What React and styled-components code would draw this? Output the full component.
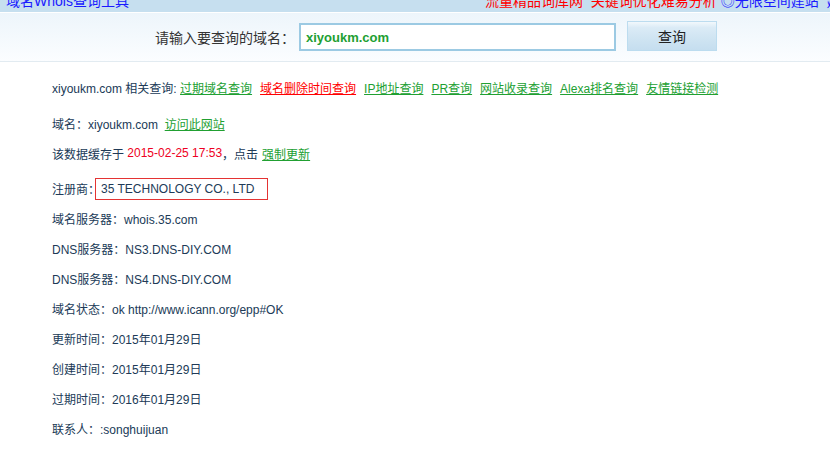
import React from "react";
import styled, { createGlobalStyle } from "styled-components";

const GlobalStyle = createGlobalStyle`
  body {
    margin: 0;
    background: #fff;
    font-family: "Liberation Sans", "Noto Sans CJK SC", sans-serif;
  }
`;

//顶部条
const TopBar = styled.div`
  height: 13px;
  overflow: hidden;
  display: flex;
  align-items: flex-end;
  padding: 0 0 4px 6px;
  box-sizing: border-box;
  background: #c6dfef;
  border-bottom: 1px solid #fff;
`;
const TopLink = styled.a`
  font-size: 14px;
  line-height: 14px;
  white-space: nowrap;
  color: ${(props) => (props.$red ? "#ff0000" : "#1a1aff")};
  margin-left: ${(props) => props.$left || 0}px;
  text-decoration: none;
`;

//搜索区
const Header = styled.div`
  height: 48px;
  display: flex;
  align-items: center;
  padding-left: 155px;
  background: linear-gradient(#edf5fb, #fbfdff);
  border-bottom: 1px solid #e2ebf1;
`;
const SearchLabel = styled.span`
  font-size: 14px;
  color: #333;
  font-family: "Noto Sans CJK SC", sans-serif;
  margin-right: 4px;
`;
const SearchInput = styled.div`
  width: 308px;
  height: 24px;
  border: 2px solid #9ccae3;
  background: #fff;
  display: flex;
  align-items: center;
  padding-left: 5px;
  font-size: 13px;
  font-weight: bold;
  color: #21a032;
`;
const SearchButton = styled.button`
  width: 90px;
  height: 30px;
  margin-left: 11px;
  margin-top: -2px;
  border: 1px solid #bcdcef;
  background: linear-gradient(#f2f8fc 0%, #dbebf6 20%, #cfe4f2 60%, #c5deef 100%);
  font-size: 14px;
  color: #222;
  font-family: "Noto Sans CJK SC", sans-serif;
  cursor: pointer;
`;

//内容
const Content = styled.div`
  padding: 10px 0 0 52px;
  font-size: 12px;
  color: #203a57;
`;
const Row = styled.div`
  height: ${(props) => props.$height || 30}px;
  margin-top: ${(props) => props.$gap || 0}px;
  display: flex;
  align-items: center;
  white-space: nowrap;
`;
const Link = styled.a`
  color: ${(props) => (props.$red ? "#f00" : "#21a032")};
  text-decoration: underline;
  margin-right: 8px;
  margin-left: ${(props) => props.$left || 0}px;
  cursor: pointer;
`;
const DateText = styled.span`
  color: #ee0022;
`;
const Boxed = styled.span`
  display: inline-flex;
  align-items: center;
  width: 166px;
  height: 20px;
  padding-left: 5px;
  margin-left: -5px;
  border: 1px solid #e43333;
`;

const related = [
  { text: "过期域名查询" },
  { text: "域名删除时间查询", red: true },
  { text: "IP地址查询" },
  { text: "PR查询" },
  { text: "网站收录查询" },
  { text: "Alexa排名查询" },
  { text: "友情链接检测" },
];

const info = [
  ["域名服务器：", "whois.35.com"],
  ["DNS服务器：", "NS3.DNS-DIY.COM"],
  ["DNS服务器：", "NS4.DNS-DIY.COM"],
  ["域名状态：", "ok http://www.icann.org/epp#OK"],
  ["更新时间：", "2015年01月29日"],
  ["创建时间：", "2015年01月29日"],
  ["过期时间：", "2016年01月29日"],
  ["联系人：", ":songhuijuan"],
];

function App() {
  return (
    <>
      <GlobalStyle />
      <TopBar>
        <TopLink>域名Whois查询工具</TopLink>
        <TopLink $red $left={356}>
          流量精品词库网&nbsp;&nbsp;关键词优化难易分析
        </TopLink>
        <TopLink $left={4}>◎无限空间建站&nbsp;&nbsp;建站</TopLink>
      </TopBar>
      <Header>
        <SearchLabel>请输入要查询的域名：</SearchLabel>
        <SearchInput>xiyoukm.com</SearchInput>
        <SearchButton>查询</SearchButton>
      </Header>
      <Content>
        <Row>
          xiyoukm.com 相关查询:&nbsp;
          {related.map((item) => (
            <Link key={item.text} $red={item.red}>
              {item.text}
            </Link>
          ))}
        </Row>
        <Row $gap={6}>
          域名：xiyoukm.com&nbsp;&nbsp;<Link>访问此网站</Link>
        </Row>
        <Row>
          该数据缓存于&nbsp;<DateText>2015-02-25 17:53</DateText>，点击
          <Link $left={4}>强制更新</Link>
        </Row>
        <Row $gap={6} $height={29}>
          注册商：<Boxed>35 TECHNOLOGY CO., LTD</Boxed>
        </Row>
        {info.map(([label, value], i) => (
          <Row key={i}>
            {label}
            {value}
          </Row>
        ))}
      </Content>
    </>
  );
}

export default App;
